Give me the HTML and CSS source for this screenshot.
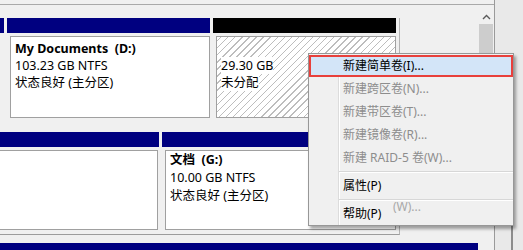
FILE: index.html
```html
<!DOCTYPE html>
<html>
<head>
  <title>磁盘管理</title>
  <link rel="stylesheet" href="styles.css">
</head>
<body>
  <div class="screen">
    <div class="main">
      <div class="topbar"></div>
      <div class="main-body">
        <div class="disks">
          <div class="row row-first">
            <div class="cell stub-a">
              <div class="bar navy"></div>
              <div class="cell-body"></div>
            </div>
            <div class="cell vol-d">
              <div class="bar navy"></div>
              <div class="cell-body">
                <div class="box">
                  <div class="name">My Documents&nbsp;&nbsp;(D:)</div>
                  <div>103.23 GB NTFS</div>
                  <div>状态良好 (主分区)</div>
                </div>
              </div>
            </div>
            <div class="cell vol-free">
              <div class="bar black"></div>
              <div class="cell-body">
                <div class="box hatch">
                  <div>&nbsp;</div>
                  <div>29.30 GB</div>
                  <div>未分配</div>
                </div>
              </div>
            </div>
          </div>

          <div class="row row-second">
            <div class="cell stub-b">
              <div class="bar navy"></div>
              <div class="cell-body">
                <div class="box box-cut"></div>
              </div>
            </div>
            <div class="cell vol-g">
              <div class="bar navy"></div>
              <div class="cell-body">
                <div class="box tall">
                  <div class="name">文档&nbsp;&nbsp;(G:)</div>
                  <div>10.00 GB NTFS</div>
                  <div>状态良好 (主分区)</div>
                </div>
              </div>
            </div>
          </div>

          <div class="row-third">
            <div class="bar navy"></div>
          </div>
        </div>

        <div class="scrollbar">
          <svg class="arrow" width="9" height="6" viewBox="0 0 9 6">
            <polyline points="1,5 4.5,1.5 8,5" fill="none" stroke="#5a5a5a" stroke-width="1.4"/>
          </svg>
          <div class="thumb"></div>
        </div>
      </div>
    </div>
    <div class="side"></div>

    <div class="menu">
      <div class="item hot">新建简单卷(I)...</div>
      <div class="item off">新建跨区卷(N)...</div>
      <div class="item off">新建带区卷(T)...</div>
      <div class="item off">新建镜像卷(R)...</div>
      <div class="item off">新建 RAID-5 卷(W)...</div>
      <div class="sep"></div>
      <div class="item">属性(P)</div>
      <div class="sep"></div>
      <div class="item">帮助(P)<span class="ghost">(W)...</span></div>
    </div>
  </div>
</body>
</html>
```

FILE: styles.css
```css
body {
  margin: 0;
  padding: 0;
  font-family: "Noto Sans", "Noto Sans CJK SC", sans-serif;
  font-size: 12px;
  color: #000;
}

.screen {
  position: relative;
  width: 523px;
  height: 250px;
  overflow: hidden;
  display: flex;
  background-color: #f0f0f0;
}

.main {
  width: 494px;
  display: flex;
  flex-direction: column;
}

.topbar {
  flex-shrink: 0;
  height: 4px;
  border-bottom: 1px solid #a9a9a9;
}

.main-body {
  flex: 1;
  min-height: 0;
  display: flex;
}

.side {
  flex: 1;
  border-left: 1px solid #9a9a9a;
  background-color: #e9e9e9;
  background-image: linear-gradient(#8c8c8c, #8c8c8c);
  background-size: 2px 200px;
  background-position: 16px 54px;
  background-repeat: no-repeat;
}

/* disk rows */

.disks {
  width: 478px;
  padding-top: 13px;
  font-size: 12.5px;
}

.row {
  display: flex;
  gap: 3px;
  width: 396px;
  padding-right: 3px;
  border-right: 1px solid #b4b4b4;
}

.row-second {
  margin-top: 11px;
  border-bottom: 1px solid #9c9c9c;
}

.row-third {
  margin-top: 8px;
}

.cell {
  display: flex;
  flex-direction: column;
}

.bar {
  flex-shrink: 0;
  height: 15px;
}

.navy {
  background-color: #000080;
}

.black {
  background-color: #000;
}

.cell-body {
  padding: 3px 0 3px 3px;
}

.stub-a {
  width: 4px;
}

.vol-d {
  width: 203px;
}

.vol-free {
  width: 183px;
}

.stub-b {
  width: 159px;
}

.stub-b .cell-body {
  padding: 3px 1px 4px 0;
}

.vol-g {
  flex: 1;
}

.vol-g .cell-body {
  padding-bottom: 4px;
}

.box {
  height: 74px;
  padding: 3px 4px;
  line-height: 17px;
  background-color: #fff;
  border: 1px solid #a0a0a0;
  white-space: nowrap;
  overflow: hidden;
}

.box.tall {
  height: 78px;
  padding-top: 0;
  padding-bottom: 0;
  line-height: 18px;
}

.box-cut {
  height: 72px;
  border-left: none;
}

.name {
  font-weight: bold;
}

.hatch {
  background-image: repeating-linear-gradient(-45deg, #fff 0, #fff 4px, #bdbdbd 4px, #bdbdbd 5px);
}

.hatch div {
  display: table;
  background-color: #fff;
}

.hatch div:first-child {
  background-color: transparent;
}

/* scrollbar */

.scrollbar {
  width: 16px;
  display: flex;
  flex-direction: column;
  align-items: center;
}

.arrow {
  margin-top: 9px;
}

.thumb {
  width: 14px;
  height: 176px;
  margin-top: 4px;
  background-color: #cdcdcd;
}

/* context menu */

.menu {
  position: absolute;
  left: 308px;
  top: 53px;
  width: 204px;
  padding: 1px 0 0;
  border: 1px solid #979797;
  background: linear-gradient(to right, #f0f0f0 29px, #dcdcdc 29px, #dcdcdc 30px, #fff 30px, #fff 31px, #f0f0f0 31px);
  box-shadow: 2px 3px 3px rgba(0, 0, 0, 0.35);
}

.item {
  position: relative;
  height: 22px;
  line-height: 22px;
  padding-left: 34px;
  white-space: nowrap;
}

.item.off {
  height: 23px;
  line-height: 23px;
  color: #8d8d8d;
}

.item.hot {
  height: 18px;
  line-height: 18px;
  padding-left: 32px;
  background-color: #d3e5f8;
  border: 2px solid #e8403c;
}

.sep {
  height: 6px;
  margin-left: 30px;
  background: linear-gradient(to bottom, transparent 2px, #d7d7d7 2px, #d7d7d7 3px, #fff 3px, #fff 4px, transparent 4px);
}

.ghost {
  position: absolute;
  left: 84px;
  top: -7px;
  color: #a8a8a8;
}
```
